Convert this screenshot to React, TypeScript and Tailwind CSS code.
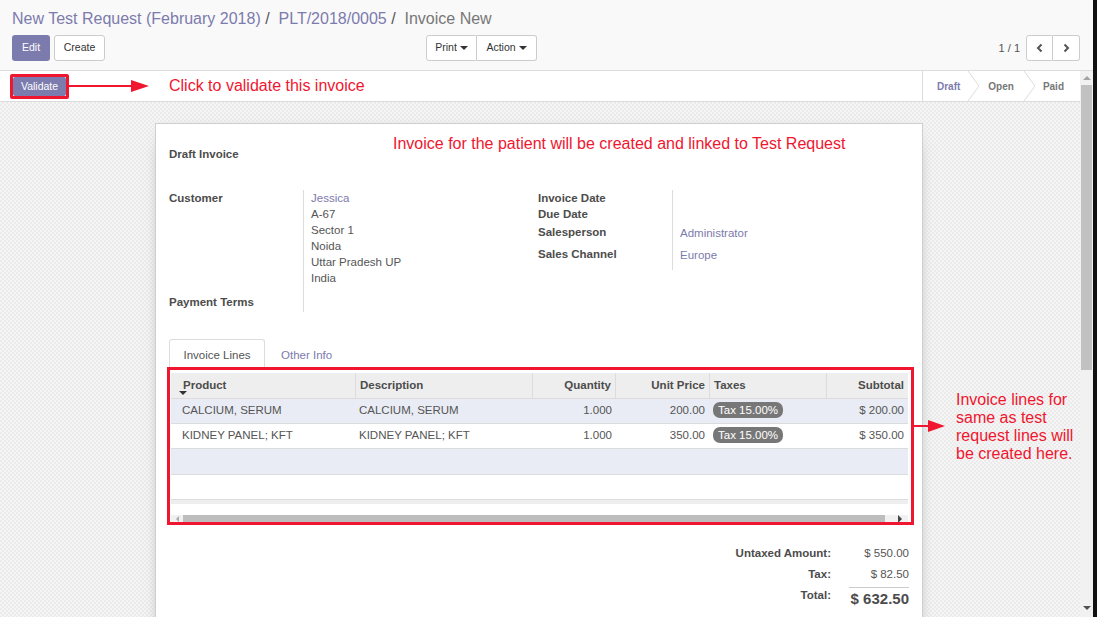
const LINK = "text-[#7c7bad]"
const RED = "#f0162f"

function Caret() {
    return <span className="inline-block ml-[3px] align-middle border-x-[4px] border-x-transparent border-t-[4px] border-t-[#333]" />
}

function Chevron({ dir }: { dir: "left" | "right" }) {
    return (
        <svg width="10" height="10" viewBox="0 0 10 10">
            {dir === "left" ? (
                <path d="M6.5 1.5 L3 5 L6.5 8.5" fill="none" stroke="#555" strokeWidth="2" />
            ) : (
                <path d="M3.5 1.5 L7 5 L3.5 8.5" fill="none" stroke="#555" strokeWidth="2" />
            )}
        </svg>
    )
}

function StatusSep() {
    return (
        <svg width="11" height="30" viewBox="0 0 11 30" className="shrink-0">
            <path d="M0 0 L11 15 L0 30" fill="none" stroke="#dcdcdc" strokeWidth="1" />
        </svg>
    )
}

function Header() {
    return (
        <div className="h-[71px] shrink-0 bg-[#f9f9f9] border-b border-[#dcdcdc] pl-[12px] pr-[13px] pt-[9px]">
            <div className="h-[20px] text-[16px] leading-[20px] whitespace-nowrap">
                <span className={LINK}>New Test Request (February 2018)</span>
                <span className="text-[#555]"> /&nbsp; </span>
                <span className={LINK}>PLT/2018/0005</span>
                <span className="text-[#555]"> /&nbsp; </span>
                <span className="text-[#777]">Invoice New</span>
            </div>
            <div className="mt-[6px] flex items-center h-[26px]">
                <div className="w-[414px] flex gap-[4px]">
                    <button className="h-[26px] w-[38px] rounded-[3px] bg-[#7c7bad] text-white text-[10.5px]">Edit</button>
                    <button className="h-[26px] w-[51px] rounded-[3px] bg-white border border-[#ccc] text-[#333] text-[10.5px]">Create</button>
                </div>
                <div className="flex h-[26px] text-[10.5px] text-[#333]">
                    <button className="w-[51px] bg-white border border-[#ccc] rounded-l-[3px] flex items-center justify-center">Print<Caret /></button>
                    <button className="w-[60px] bg-white border border-l-0 border-[#ccc] rounded-r-[3px] flex items-center justify-center">Action<Caret /></button>
                </div>
                <div className="flex-1 flex justify-end items-center">
                    <span className="text-[11px] text-[#555] mr-[6px]">1 / 1</span>
                    <button className="w-[27px] h-[26px] bg-white border border-[#ccc] rounded-l-[3px] flex items-center justify-center"><Chevron dir="left" /></button>
                    <button className="w-[27px] h-[26px] bg-white border border-l-0 border-[#ccc] rounded-r-[3px] flex items-center justify-center"><Chevron dir="right" /></button>
                </div>
            </div>
        </div>
    )
}

function StatusBar() {
    return (
        <div className="h-[31px] shrink-0 bg-white border-b border-[#dcdcdc] flex items-center">
            <div className="ml-[13px] relative flex h-[19px]">
                <div className="absolute -left-[3px] -top-[3px] w-[59px] h-[25px] border-[3px] border-[#f0162f] rounded-[2px]" />
                <button className="w-[53px] h-[19px] bg-[#7c7bad] text-white text-[10.5px] leading-[19px] rounded-[2px]">Validate</button>
            </div>
            <svg width="84" height="14" viewBox="0 0 84 14" className="ml-[1px]">
                <line x1="0" y1="7" x2="68" y2="7" stroke={RED} strokeWidth="2" />
                <path d="M64 1 L82 7 L64 13 Z" fill={RED} />
            </svg>
            <span className="ml-[18px] text-[16px] text-[#f0162f]">Click to validate this invoice</span>
            <div className="ml-auto h-full flex items-center border-l border-[#dcdcdc] text-[10px] font-bold">
                <span className="pl-[14px] pr-[8px] text-[#7c7bad]">Draft</span>
                <StatusSep />
                <span className="pl-[9px] pr-[10px] text-[#777]">Open</span>
                <StatusSep />
                <span className="pl-[8px] pr-[16px] text-[#777]">Paid</span>
            </div>
        </div>
    )
}

const cols = ["w-[184px]", "w-[177px]", "w-[83px]", "w-[94px]", "w-[117px]", "w-[82px]"]

const lines = [
    { product: "CALCIUM, SERUM", desc: "CALCIUM, SERUM", qty: "1.000", price: "200.00", total: "$ 200.00" },
    { product: "KIDNEY PANEL; KFT", desc: "KIDNEY PANEL; KFT", qty: "1.000", price: "350.00", total: "$ 350.00" },
]

function LinesTable() {
    const rows = lines.map((line, i) => (
        <div key={i} className={"flex h-[25px] items-center border-t border-[#dcdcdc] " + (i % 2 === 0 ? "bg-[#e9ecf4]" : "bg-white")}>
            <div className={cols[0] + " pl-[11px] whitespace-nowrap"}>{line.product}</div>
            <div className={cols[1] + " pl-[4px] whitespace-nowrap"}>{line.desc}</div>
            <div className={cols[2] + " pr-[3px] text-right"}>{line.qty}</div>
            <div className={cols[3] + " pr-[4px] text-right"}>{line.price}</div>
            <div className={cols[4] + " pl-[4px]"}>
                <span className="inline-block h-[16px] leading-[16px] px-[5px] rounded-[7px] bg-[#777] text-white">Tax 15.00%</span>
            </div>
            <div className={cols[5] + " pr-[4px] text-right"}>{line.total}</div>
        </div>
    ))

    return (
        <div className="relative ml-[2px] w-[737px] mt-[3px]">
            <div className="absolute -left-[4px] -top-[6px] -right-[6px] -bottom-[2px] border-[3px] border-[#f0162f] pointer-events-none" />
            <div className="flex h-[25px] items-center bg-[#eeeeee] font-bold text-[#4c4c4c]">
                <div className={cols[0] + " h-full pl-[12px] flex items-center relative"}>
                    Product
                    <span className="absolute left-[8px] top-[18px] border-x-[4px] border-x-transparent border-t-[4px] border-t-[#333]" />
                </div>
                <div className={cols[1] + " h-full pl-[4px] flex items-center border-l border-[#dcdcdc]"}>Description</div>
                <div className={cols[2] + " h-full pr-[4px] flex items-center justify-end border-l border-[#dcdcdc]"}>Quantity</div>
                <div className={cols[3] + " h-full pr-[4px] flex items-center justify-end border-l border-[#dcdcdc]"}>Unit Price</div>
                <div className={cols[4] + " h-full pl-[4px] flex items-center border-l border-[#dcdcdc]"}>Taxes</div>
                <div className={cols[5] + " h-full pr-[4px] flex items-center justify-end border-l border-[#dcdcdc]"}>Subtotal</div>
            </div>
            <div className="text-[#555]">
                {rows}
                <div className="h-[26px] border-t border-[#dcdcdc] bg-[#e9ecf4]" />
                <div className="h-[25px] border-t border-[#dcdcdc] bg-white" />
                <div className="h-[5px] border-t border-[#dcdcdc] bg-[#eeeeee]" />
            </div>
            <div className="mt-[11px] h-[8px] flex items-center bg-[#f1f1f1]">
                <div className="w-[12px] flex justify-center">
                    <span className="border-y-[3px] border-y-transparent border-r-[3px] border-r-[#aaa]" />
                </div>
                <div className="w-[702px] h-full bg-[#bdbdbd]" />
                <div className="flex-1 flex justify-end pr-[6px]">
                    <span className="border-y-[4px] border-y-transparent border-l-[4px] border-l-[#444]" />
                </div>
            </div>
        </div>
    )
}

function Sheet() {
    return (
        <div className="relative ml-[155px] w-[768px] bg-white border border-[#cfcfcf] shadow-[0_5px_20px_-15px_#000] px-[13px] pt-[22px] pb-[30px] text-[11.5px] text-[#555]">
            <div className="absolute left-[237px] top-[11px] text-[16px] leading-[18px] text-[#f0162f] whitespace-nowrap">
                Invoice for the patient will be created and linked to Test Request
            </div>
            <div className="h-[16px] leading-[16px] font-bold text-[#4c4c4c]">Draft Invoice</div>

            <div className="mt-[28px] grid grid-cols-2 leading-[16px]">
                <div>
                    <div className="flex">
                        <div className="w-[134px] font-bold text-[#4c4c4c]">Customer</div>
                        <div className="border-l border-[#dcdcdc] pl-[7px]">
                            <div className={LINK}>Jessica</div>
                            <div>A-67</div>
                            <div>Sector 1</div>
                            <div>Noida</div>
                            <div>Uttar Pradesh UP</div>
                            <div>India</div>
                        </div>
                    </div>
                    <div className="flex">
                        <div className="w-[134px] pt-[8px] pb-[2px] font-bold text-[#4c4c4c]">Payment Terms</div>
                        <div className="border-l border-[#dcdcdc]" />
                    </div>
                </div>
                <div className="-ml-[1px]">
                    <div className="flex">
                        <div className="w-[134px] font-bold text-[#4c4c4c]">
                            <div className="h-[16px]">Invoice Date</div>
                            <div className="h-[16px]">Due Date</div>
                            <div className="h-[20px] pt-[2px]">Salesperson</div>
                            <div className="h-[28px] pt-[4px]">Sales Channel</div>
                        </div>
                        <div className="border-l border-[#dcdcdc] pl-[7px]">
                            <div className="h-[16px]" />
                            <div className="h-[16px]" />
                            <div className={"h-[20px] pt-[3px] " + LINK}>Administrator</div>
                            <div className={"h-[28px] pt-[5px] " + LINK}>Europe</div>
                        </div>
                    </div>
                </div>
            </div>

            <div className="mt-[27px] flex h-[31px] border-b border-[#dcdcdc]">
                <div className="w-[96px] h-[31px] pt-[2px] bg-white border border-[#dcdcdc] border-b-white rounded-t-[3px] flex items-center justify-center text-[#555]">Invoice Lines</div>
                <div className={"pl-[16px] pt-[3px] flex items-center " + LINK}>Other Info</div>
            </div>

            <LinesTable />

            <div className="mt-[22px] flex justify-end leading-[16px]">
                <div className="text-right font-bold text-[#4c4c4c] mr-[18px]">
                    <div>Untaxed Amount:</div>
                    <div className="mt-[5px]">Tax:</div>
                    <div className="mt-[5px]">Total:</div>
                </div>
                <div className="w-[60px] text-right">
                    <div>$ 550.00</div>
                    <div className="mt-[5px]">$ 82.50</div>
                    <div className="mt-[5px] border-t border-[#ccc] text-[15px] leading-[22px] font-bold text-[#4c4c4c] whitespace-nowrap">$ 632.50</div>
                </div>
            </div>
        </div>
    )
}

function VScroll() {
    return (
        <div className="w-[13px] shrink-0 bg-[#f1f1f1] flex flex-col items-center">
            <div className="h-[14px] flex items-center">
                <span className="border-x-[4px] border-x-transparent border-b-[4px] border-b-[#a3a3a3]" />
            </div>
            <div className="w-[11px] h-[285px] bg-[#c1c1c1]" />
            <div className="flex-1" />
            <div className="h-[18px] flex items-center">
                <span className="border-x-[4px] border-x-transparent border-t-[4px] border-t-[#505050]" />
            </div>
        </div>
    )
}

export default function App() {
    return (
        <div className="relative w-[1097px] h-[617px] overflow-hidden flex font-['Liberation_Sans',Arial,sans-serif] bg-[#f9f9f9]">
            <div className="w-[1093px] h-full flex flex-col">
                <Header />
                <div className="flex flex-1 min-h-0">
                    <div className="flex-1 flex flex-col min-w-0">
                        <StatusBar />
                        <div className="flex-1 overflow-hidden pt-[21px] bg-[#f0f0f0] bg-[image:repeating-conic-gradient(#ebebeb_0_25%,#f5f5f5_0_50%)] bg-[length:4px_4px]">
                            <Sheet />
                        </div>
                    </div>
                    <VScroll />
                </div>
            </div>
            <div className="w-[4px] h-full bg-[#111]" />

            <svg width="34" height="14" viewBox="0 0 34 14" className="absolute left-[912px] top-[419px]">
                <line x1="0" y1="7" x2="20" y2="7" stroke={RED} strokeWidth="2" />
                <path d="M16 1 L33 7 L16 13 Z" fill={RED} />
            </svg>
            <div className="absolute left-[956px] top-[391px] text-[16px] leading-[18px] text-[#f0162f]">
                Invoice lines for<br />same as test<br />request lines will<br />be created here.
            </div>
        </div>
    )
}
